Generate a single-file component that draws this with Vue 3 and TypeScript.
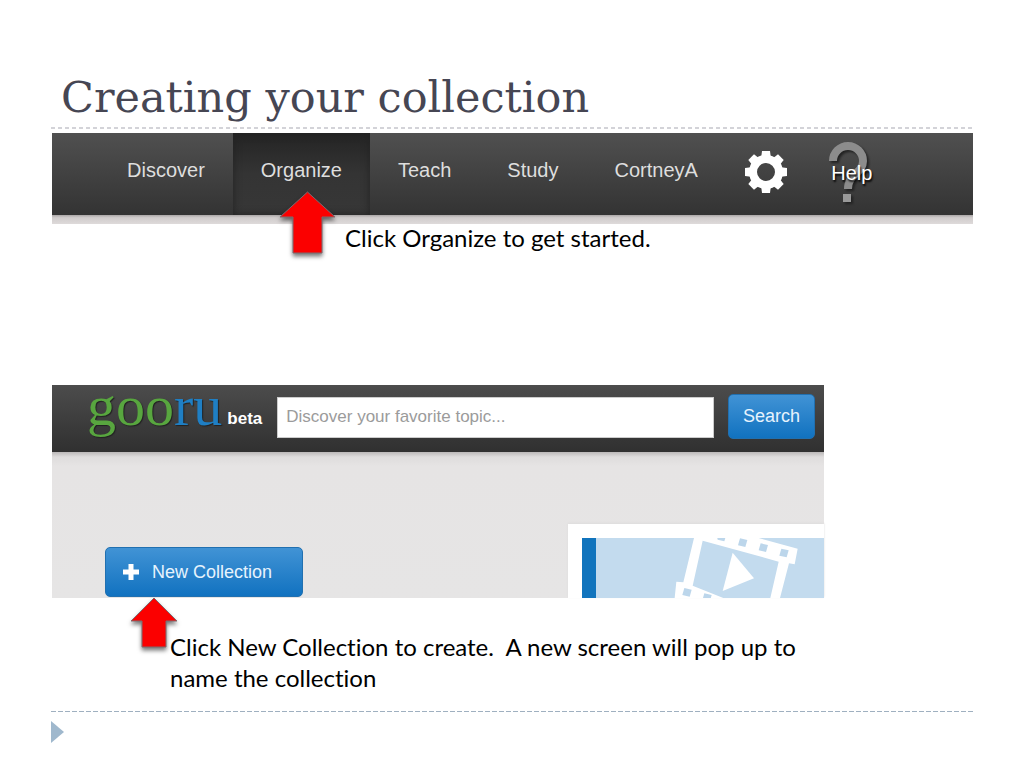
<script setup lang="ts">
import { ref } from 'vue'

interface NavItem {
  label: string
  active?: boolean
}

const items: NavItem[] = [
  { label: 'Discover' },
  { label: 'Organize', active: true },
  { label: 'Teach' },
  { label: 'Study' },
  { label: 'CortneyA' },
]
const query = ref('')
const teeth = [0, 45, 90, 135, 180, 225, 270, 315]
</script>

<template>
  <main class="slide">
    <h1>Creating your collection</h1>
    <div class="rule rule-top"></div>

    <section class="step">
      <nav class="nav">
        <a v-for="item in items" :key="item.label" href="#" :class="{ active: item.active }">{{ item.label }}</a>
        <button class="gear" type="button" aria-label="Settings">
          <svg width="44" height="44" viewBox="-22 -22 44 44">
            <g fill="#fff">
              <path v-for="t in teeth" :key="t" d="M-5 -13L-4 -21H4L5 -13Z" :transform="`rotate(${t})`" />
            </g>
            <circle r="13" fill="none" stroke="#fff" stroke-width="8" />
          </svg>
        </button>
        <a class="help" href="#">
          <svg width="52" height="68" viewBox="823 139 52 68">
            <g class="mark">
              <path d="M832 161A15 15 0 0 1 862 161C862 174 847 173 847 189" fill="none" stroke="#8c8c8c" stroke-width="8" />
              <path d="M842 194h8v8h-8z" fill="#999" />
            </g>
          </svg>
          <span>Help</span>
        </a>
      </nav>
      <div class="nav-shadow"></div>
      <svg class="arrow arrow-one" width="64" height="70" viewBox="276 188 64 70">
        <path d="M307.500 192L335 217H322V253H293V217H280Z" />
      </svg>
      <p class="caption caption-one">Click Organize to get started.</p>
    </section>

    <section class="step">
      <div class="shot">
        <form class="bar" @submit.prevent>
          <div class="logo"><span class="goo">goo</span><span class="ru">ru</span></div>
          <b class="beta">beta</b>
          <input v-model="query" type="text" aria-label="Search topics" placeholder="Discover your favorite topic..." />
          <button class="blue search" type="submit">Search</button>
        </form>
        <div class="body">
          <button class="blue create" type="button">
            <svg width="18" height="18" viewBox="0 0 18 18">
              <path d="M6.500 1h5v5.500H17v5h-5.500V17h-5v-5.500H1v-5h5.500z" fill="#fff" />
            </svg>
            New Collection
          </button>
          <div class="card">
            <div class="thumb">
              <svg width="228" height="60" viewBox="108 489 684 180">
                <g fill="#fff">
                  <path d="M402 489H596L713 521L704 568L687 565L660 669H631L656 560L428 497L398 632L490 669H344L349 620L370 622Z" />
                </g>
                <path d="M518 533L582 610L488 648Z" fill="#fff" />
                <g fill="#bcd6eb">
                  <path d="M472 489h24l-3 10l-20 -5z" />
                  <path d="M540 490l22 5l-6 21l-22 -5z" />
                  <path d="M602 505l22 5l-6 21l-22 -5z" />
                  <path d="M664 521l22 5l-6 21l-22 -5z" />
                  <path d="M373 639l22 5l-6 21l-22 -5z" />
                  <path d="M433 655l22 5l-6 21l-22 -5z" />
                </g>
              </svg>
            </div>
          </div>
        </div>
      </div>
      <svg class="arrow arrow-two" width="54" height="60" viewBox="127 594 54 60">
        <path d="M154 598L177 621H166V647H142V621H131Z" />
      </svg>
      <p class="caption caption-two">Click New Collection to create.&nbsp; A new screen will pop up to name the collection</p>
    </section>

    <footer>
      <div class="rule rule-bottom"></div>
      <svg width="14" height="22" viewBox="0 0 14 22"><path d="M0 0L13 11L0 22Z" fill="#9fb8cd" /></svg>
    </footer>
  </main>
</template>

<style>
body {
  margin: 0;
  background: #fff;
}
</style>

<style scoped>
.slide {
  padding: 68px 51px 24px;
  font-family: "Liberation Sans", Arial, sans-serif;
}
h1 {
  margin: 0;
  padding-left: 10px;
  font: 400 43px/59px "Bookman Old Style", "DejaVu Serif", serif;
  color: #464653;
  white-space: nowrap;
}
.rule-top {
  height: 2px;
  margin-bottom: 4px;
  background: repeating-linear-gradient(90deg, #d3d3d8 0 4px, #fff 4px 7px);
}
.rule-bottom {
  height: 1px;
  margin-bottom: 9px;
  background: repeating-linear-gradient(90deg, #9fb0c0 0 5px, #fff 5px 7px);
}
.step {
  position: relative;
  margin-left: 1px;
}
.nav {
  display: flex;
  height: 82px;
  padding-left: 47px;
  background: linear-gradient(#505050, #333);
  font-size: 20px;
}
.nav a {
  color: #dedede;
  text-decoration: none;
}
.nav > a:not(.help) {
  padding: 0 28px;
  line-height: 74px;
}
.nav .active {
  background: linear-gradient(#242424, #343434 50%, #373737);
  box-shadow: inset 0 0 8px #222;
}
button {
  font-family: inherit;
  cursor: pointer;
}
.gear {
  width: 44px;
  height: 44px;
  margin: 17px 36px 0 18px;
  padding: 0;
  border: 0;
  background: none;
}
.nav .help {
  display: grid;
  height: 68px;
  margin-top: 6px;
  color: #fff;
  text-shadow: 1px 2px 2px #000;
}
.help > * {
  grid-area: 1 / 1;
  place-self: center;
}
.help span {
  z-index: 1;
  padding-left: 4px;
}
.mark {
  filter: drop-shadow(2px 2px 1px #222);
}
.nav-shadow {
  height: 9px;
  background: linear-gradient(#aaa6a6, #d0cccc 30%, #dedada);
}
.arrow {
  position: absolute;
  filter: drop-shadow(0 3px 2px #0008);
}
.arrow path {
  fill: #fb0000;
  stroke: #7e6a6e;
}
.arrow-one {
  left: 224px;
  top: 55px;
}
.arrow-two {
  left: 75px;
  top: 209px;
}
.caption {
  margin: 0;
  font: 400 24px/31px "Gill Sans MT", Lato, sans-serif;
  font-variant-ligatures: none;
  color: #000;
}
.caption-one {
  margin-top: -2px;
  padding: 0 0 132px 293px;
}
.caption-two {
  max-width: 650px;
  padding: 33px 0 18px 118px;
}
.shot {
  margin-right: 149px;
}
.bar {
  display: flex;
  height: 67px;
  box-sizing: border-box;
  padding: 9px 9px 0 35px;
  background: linear-gradient(#4c4c4c, #303030);
}
.logo {
  margin-top: -20px;
  font: 400 58px/64px "Liberation Serif", serif;
  text-shadow: 1px 1px 1px #222;
}
.goo {
  color: #58a63f;
}
.ru {
  color: #1f7fc4;
}
.beta {
  margin: 14px 15px 0 5px;
  font-size: 17px;
  line-height: 22px;
  color: #fff;
}
input {
  flex: 1;
  min-width: 0;
  height: 41px;
  box-sizing: border-box;
  margin: 3px 14px 0 0;
  padding: 0 8px 2px;
  border: 1px solid #ccc;
  background: #fff;
  font: 17px "Liberation Sans", Arial, sans-serif;
  color: #444;
}
input::placeholder {
  color: #9b9b9b;
  opacity: 1;
}
.blue {
  box-sizing: border-box;
  border: 1px solid #2170b0;
  border-radius: 5px;
  background: linear-gradient(#4193d5, #1172c0);
  font-size: 18px;
  color: #e6f3fd;
}
.search {
  width: 87px;
  height: 45px;
  padding: 0;
}
.body {
  display: flex;
  justify-content: space-between;
  height: 146px;
  padding-left: 53px;
  background: linear-gradient(#bbb8b8, #dedcdc 5px, #e6e4e4 14px, #e6e5e5);
}
.create {
  display: flex;
  align-items: center;
  gap: 12px;
  width: 198px;
  height: 50px;
  margin-top: 95px;
  padding: 0 0 0 16px;
}
.card {
  box-sizing: border-box;
  width: 256px;
  margin-top: 72px;
  padding: 14px 0 0 14px;
  background: #fff;
  box-shadow: 0 -1px 2px #dedcdc;
}
.thumb {
  height: 60px;
  overflow: hidden;
  border-left: 14px solid #1174bd;
  background: #c3dbee;
}
svg {
  display: block;
}
</style>
